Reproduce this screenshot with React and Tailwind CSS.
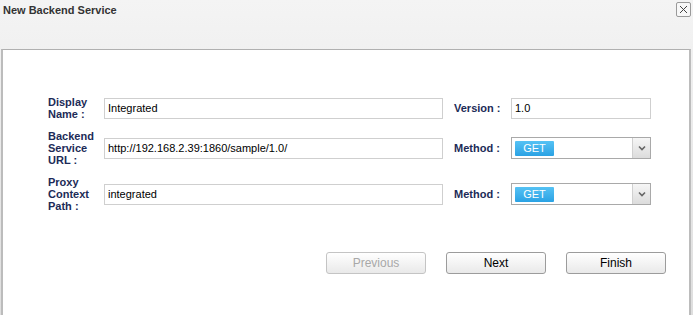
const labelCls = "text-[11px] leading-[12px] font-bold text-[#1c2b57]";
const inputCls =
  "h-[21px] border border-[#cfcfcf] bg-white px-[3px] flex items-center text-[11px] text-black";

const MethodSelect = () => (
  <div className="h-[22px] border border-[#a9a9a9] bg-white flex items-stretch">
    <div className="flex-1 flex items-center pl-[3px]">
      <div className="w-[39px] h-[15px] bg-gradient-to-b from-[#55c2f4] to-[#2aa2e4] rounded-[1px] flex items-center justify-center text-white text-[11px] leading-none">
        GET
      </div>
    </div>
    <div className="w-[18px] border-l border-[#d0d0d0] bg-gradient-to-b from-[#f6f6f6] to-[#dcdcdc] flex items-center justify-center">
      <svg width="8" height="6" viewBox="0 0 8 6">
        <path d="M1 1.5 L4 4.5 L7 1.5" fill="none" stroke="#666" strokeWidth="1.6" />
      </svg>
    </div>
  </div>
);

const Button = ({ children, disabled }) => (
  <button
    className={`w-[100px] h-[22px] rounded-[3px] border text-[12px] bg-gradient-to-b from-white to-[#e9e9e9] ${
      disabled ? "border-[#c4c4c4] text-[#a8a8a8]" : "border-[#9c9c9c] text-black"
    }`}
  >
    {children}
  </button>
);

export default function App() {
  return (
    <div
      className="w-[693px] h-[315px] overflow-hidden bg-gradient-to-b from-[#f4f4f4] to-[#dedede] flex flex-col"
      style={{ fontFamily: '"Liberation Sans", Arial, sans-serif' }}
    >
      <div className="h-[49px] shrink-0 flex justify-between items-start">
        <div className="pl-[3px] pt-[2px] text-[11px] font-bold text-[#333]">New Backend Service</div>
        <div className="mt-[2px] mr-[2px] w-[15px] h-[15px] border border-[#9a9a9a] rounded-[2px] bg-[#f8f8f8] flex items-center justify-center">
          <svg width="9" height="9" viewBox="0 0 9 9">
            <path d="M1 1 L8 8 M8 1 L1 8" stroke="#444" strokeWidth="1" />
          </svg>
        </div>
      </div>
      <div className="flex-1 ml-[1px] mr-[2px] bg-white border-t border-l-2 border-r-2 border-[#bcbcbc] border-t-[#b0b0b0] pt-[46px] pl-[45px]">
        <div className="grid grid-cols-[56px_339px_57px_141px] gap-y-[10px] items-center">
          <div className={labelCls}>Display<br />Name :</div>
          <div className={inputCls + " text-[#3d0a45]"}>Integrated</div>
          <div className={labelCls + " pl-[11px] w-[70px]"}>Version :</div>
          <div className={inputCls + " ml-[11px] w-[140px]"}>1.0</div>

          <div className={labelCls}>Backend<br />Service<br />URL :</div>
          <div className={inputCls}>http://192.168.2.39:1860/sample/1.0/</div>
          <div className={labelCls + " pl-[11px] w-[70px]"}>Method :</div>
          <div className="ml-[11px] w-[140px]"><MethodSelect /></div>

          <div className={labelCls}>Proxy<br />Context<br />Path :</div>
          <div className={inputCls}>integrated</div>
          <div className={labelCls + " pl-[11px] w-[70px]"}>Method :</div>
          <div className="ml-[11px] w-[140px]"><MethodSelect /></div>
        </div>
        <div className="mt-[40px] flex justify-end gap-[20px] pr-[23px]">
          <Button disabled>Previous</Button>
          <Button>Next</Button>
          <Button>Finish</Button>
        </div>
      </div>
    </div>
  );
}
